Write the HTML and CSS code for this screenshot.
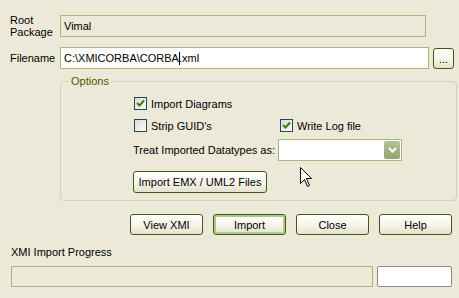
FILE: index.html
```html
<!DOCTYPE html>
<html lang="en">
<head>
    <meta charset="UTF-8">
    <title>XMI Import</title>
    <link rel="stylesheet" href="styles.css">
</head>
<body>
    <div class="dialog">
        <div class="row root">
            <div class="label">Root<br>Package</div>
            <div class="field">Vimal</div>
        </div>
        <div class="row filename">
            <div class="label">Filename</div>
            <div class="field white">C:\XMICORBA\CORBA<span class="caret"></span>.xml</div>
            <button class="btn browse">...</button>
        </div>

        <fieldset class="options">
            <legend>Options</legend>
            <div class="options-body">
                <div class="opt-row first">
                    <label class="check"><span class="box checked"><svg width="9" height="9" viewBox="0 0 9 9"><path d="M1 4 L3.5 6.5 L8 1.5" fill="none" stroke="#3f7a14" stroke-width="2"/></svg></span>Import Diagrams</label>
                </div>
                <div class="opt-row second">
                    <label class="check"><span class="box"></span>Strip GUID's</label>
                    <label class="check"><span class="box checked"><svg width="9" height="9" viewBox="0 0 9 9"><path d="M1 4 L3.5 6.5 L8 1.5" fill="none" stroke="#3f7a14" stroke-width="2"/></svg></span>Write Log file</label>
                </div>
                <div class="opt-row types">
                    <span class="type-label">Treat Imported Datatypes as:</span>
                    <div class="combo">
                        <span class="drop"><svg width="9" height="6" viewBox="0 0 9 6"><path d="M1 1 L4.5 4.5 L8 1" fill="none" stroke="#fff" stroke-width="2"/></svg></span>
                    </div>
                </div>
                <div class="opt-row emx">
                    <button class="btn emx-btn">Import EMX / UML2 Files</button>
                </div>
            </div>
        </fieldset>

        <div class="actions">
            <button class="btn">View XMI</button>
            <button class="btn default">Import</button>
            <button class="btn">Close</button>
            <button class="btn">Help</button>
        </div>

        <div class="progress-label">XMI Import Progress</div>
        <div class="progress-row">
            <div class="progress"></div>
            <div class="status"></div>
        </div>
    </div>

    <!-- mouse pointer over the dialog -->
    <svg class="pointer" width="13" height="21" viewBox="0 0 13 21">
        <path d="M0.5 0.5 L0.5 16.5 L4.5 12.5 L7.5 19.5 L9.5 18.5 L6.5 11.5 L11.5 11.5 Z" fill="#fff" stroke="#000" stroke-width="1"/>
    </svg>
</body>
</html>
```

FILE: styles.css
```css
body {
    margin: 0;
    width: 459px;
    height: 298px;
    overflow: hidden;
    position: relative;
    background-color: #ece9d8;
    font-family: "Liberation Sans", Arial, sans-serif;
    font-size: 11px;
    color: #000;
}
.dialog {
    padding: 14px 0 0 10px;
}
.row {
    display: flex;
    align-items: center;
}
.label {
    width: 50px;
    line-height: 12px;
}
.field {
    height: 22px;
    box-sizing: border-box;
    border: 1px solid #a5b97f;
    background-color: #ece9d8;
    padding: 0 3px;
    display: flex;
    align-items: center;
}
.root .field {
    width: 366px;
}
.filename {
    margin-top: 9px;
}
.filename .field {
    width: 369px;
}
.white {
    background-color: #fff;
}
.caret {
    display: inline-block;
    width: 0;
    height: 13px;
    border-left: 1px solid #000;
    margin-right: -1px;
}
.btn {
    height: 21px;
    box-sizing: border-box;
    border: 1px solid #3d5a14;
    border-radius: 3px;
    background: linear-gradient(#ffffff, #f5f4ea 55%, #e4e1cc);
    font-family: inherit;
    font-size: 11px;
    color: #000;
    padding: 0;
}
.browse {
    width: 21px;
    margin-left: 4px;
    margin-top: 1px;
}
/* Options group box */
.options {
    margin: 6px 0 0 50px;
    width: 397px;
    height: 126px;
    box-sizing: border-box;
    border: 1px solid #d0d0bf;
    border-radius: 4px;
    padding: 0;
}
.options legend {
    margin-left: 8px;
    padding: 0 2px;
    color: #4a5a05;
}
.options-body {
    padding-left: 72px;
}
.opt-row {
    display: flex;
    align-items: center;
}
.first {
    margin-top: 10px;
}
.second {
    margin-top: 9px;
}
.types {
    margin-top: 7px;
}
.emx {
    margin-top: 10px;
}
.check {
    display: flex;
    align-items: center;
    width: 145px;
    margin-left: 1px;
    height: 13px;
}
.box {
    width: 13px;
    height: 13px;
    box-sizing: border-box;
    border: 1px solid #1f4a58;
    background: linear-gradient(135deg, #dcdcd3, #fbfbf9);
    margin-right: 4px;
    display: flex;
    align-items: center;
    justify-content: center;
}
.type-label {
    width: 145px;
}
.combo {
    width: 124px;
    height: 22px;
    box-sizing: border-box;
    border: 1px solid #a5b97f;
    background-color: #fff;
    display: flex;
    justify-content: flex-end;
    padding: 1px;
}
.drop {
    width: 16px;
    height: 18px;
    border-radius: 2px;
    background: linear-gradient(#b4c197, #93a46f);
    display: flex;
    align-items: center;
    justify-content: center;
}
.emx-btn {
    width: 134px;
    height: 22px;
}
/* Bottom buttons */
.actions {
    display: flex;
    gap: 10px;
    margin: 13px 0 0 120px;
}
.actions .btn {
    width: 73px;
}
.default {
    box-shadow: inset 0 0 0 2px #aec98a;
}
.progress-label {
    margin: 11px 0 0 1px;
}
.progress-row {
    display: flex;
    margin: 8px 0 0 1px;
    gap: 4px;
}
.progress {
    width: 362px;
    height: 21px;
    box-sizing: border-box;
    border: 1px solid #a5b97f;
}
.status {
    width: 75px;
    height: 21px;
    box-sizing: border-box;
    border: 1px solid #8c8c84;
    border-radius: 2px;
    background-color: #fff;
}
.pointer {
    position: absolute;
    left: 300px;
    top: 167px;
}
```
